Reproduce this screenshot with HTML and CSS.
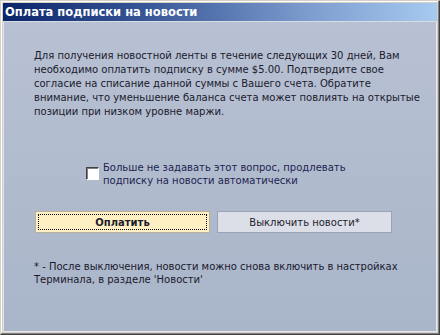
FILE: index.html
```html
<!DOCTYPE html>
<html lang="ru">
<head>
  <meta charset="UTF-8" />
  <title>Оплата подписки на новости</title>
  <link rel="stylesheet" href="styles.css">
</head>
<body>
  <div class="window">
    <div class="title-bar">Оплата подписки на новости</div>
    <div class="content">
      <p class="message">
        Для получения новостной ленты в течение следующих 30 дней, Вам<br>
        необходимо оплатить подписку в сумме $5.00. Подтвердите свое<br>
        согласие на списание данной суммы с Вашего счета. Обратите<br>
        внимание, что уменьшение баланса счета может повлиять на открытые<br>
        позиции при низком уровне маржи.
      </p>

      <label class="auto-renew">
        <span class="checkbox"></span>
        <span class="auto-text">Больше не задавать этот вопрос, продлевать<br>подписку на новости автоматически</span>
      </label>

      <div class="buttons">
        <button class="btn btn-pay"><span class="focus">Оплатить</span></button>
        <button class="btn btn-off">Выключить новости*</button>
      </div>

      <p class="note">
        * - После выключения, новости можно снова включить в настройках<br>
        Терминала, в разделе 'Новости'
      </p>
    </div>
  </div>
</body>
</html>
```

FILE: styles.css
```css
body {
  margin: 0;
  background: #ffffff;
  font-family: 'DejaVu Sans', 'Liberation Sans', sans-serif;
}

.window {
  width: 440px;
  height: 335px;
  box-sizing: border-box;
  display: flex;
  flex-direction: column;
  background: #d4d0c8;
  border: 1px solid;
  border-color: #d4d0c8 #404040 #404040 #d4d0c8;
  padding: 2px;
  box-shadow: inset -1px -1px 0 #808080, inset 1px 1px 0 #ffffff;
}

.title-bar {
  height: 18px;
  line-height: 18px;
  padding-left: 2px;
  color: #ffffff;
  font-weight: bold;
  font-size: 11.5px;
  background: linear-gradient(90deg, #0a246a 0%, #3a5a9a 35%, #7c9cce 70%, #a6caf0 100%);
  border-bottom: 1px solid #d8dce4;
}

.content {
  flex: 1;
  background: linear-gradient(180deg, #b8c1d3 0%, #a9b5c9 100%);
  border-left: 1px solid #dfe3ea;
  border-right: 1px solid #e6e8ee;
  border-bottom: 1px solid #e6e8ee;
  padding: 0 0 0 30px;
  color: #1a1a2c;
  font-size: 10px;
}

.message {
  margin: 27px 0 0;
  line-height: 14px;
}

.auto-renew {
  display: flex;
  align-items: flex-start;
  gap: 4px;
  margin: 42px 0 0 52px;
  color: #1e1e50;
  line-height: 13px;
}

.checkbox {
  width: 11px;
  height: 11px;
  margin-top: 6px;
  background: #ffffff;
  border: 1px solid;
  border-color: #404040 #ffffff #ffffff #404040;
  box-shadow: inset 1px 1px 0 #808080;
}

.buttons {
  display: flex;
  gap: 7px;
  margin: 24px 0 0 1px;
}

.btn {
  width: 175px;
  height: 22px;
  padding: 2px;
  font-family: inherit;
  font-size: 10px;
  color: #1c1c2c;
  cursor: pointer;
}

.btn-pay {
  background: #fff0c4;
  border: 1px solid #b8b098;
  font-weight: bold;
}

.btn-pay .focus {
  display: flex;
  align-items: center;
  justify-content: center;
  height: 100%;
  box-sizing: border-box;
  border: 1px dotted #000000;
}

.btn-off {
  background: #dcdfe8;
  border: 1px solid #9aa4b8;
}

.note {
  margin: 27px 0 0;
  line-height: 13px;
}
```
